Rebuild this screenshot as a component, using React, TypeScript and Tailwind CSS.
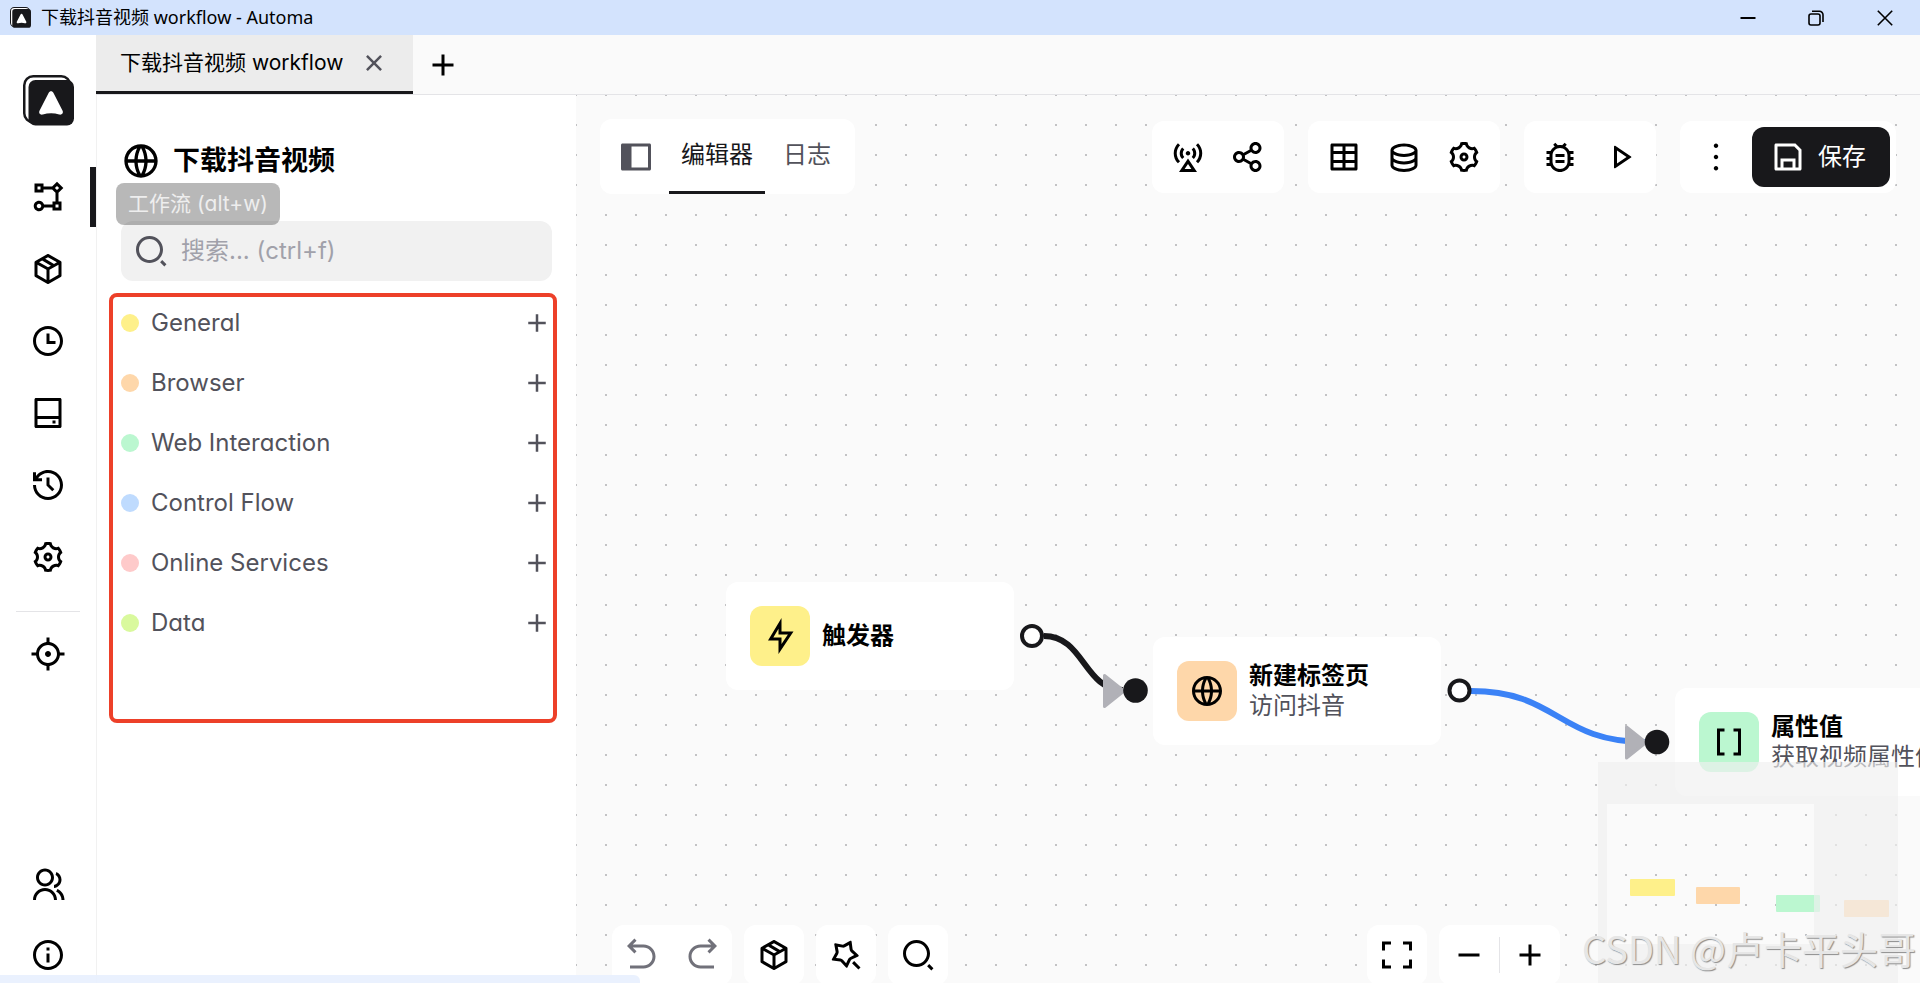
import React, { useState } from 'react';
import type { IconType } from 'react-icons';
import {
    RiAddLine,
    RiArrowGoBackLine,
    RiArrowGoForwardLine,
    RiBaseStationLine,
    RiBracketsLine,
    RiBug2Line,
    RiCloseLine,
    RiDatabase2Line,
    RiFlashlightLine,
    RiFlowChart,
    RiFocus3Line,
    RiFullscreenLine,
    RiGlobalLine,
    RiGroupLine,
    RiHardDrive2Line,
    RiHistoryLine,
    RiInformationLine,
    RiMagicLine,
    RiMore2Line,
    RiPlayLine,
    RiSaveLine,
    RiSearch2Line,
    RiSettings3Line,
    RiShareLine,
    RiSideBarFill,
    RiSubtractLine,
    RiTable2,
    RiTimeLine,
} from 'react-icons/ri';

interface NavItem {
    name: string;
    icon: IconType;
}

interface Category {
    name: string;
    color: string;
}

interface FlowNode {
    title: string;
    description?: string;
    icon: IconType;
    color: string;
    position: string;
}

const PackageIcon: IconType = ({ size = 24 }) => (
    <svg width={size} height={size} viewBox="0 0 24 24" fill="currentColor" aria-hidden="true">
        <path d="M21 16.5c0 .38-.21.71-.53.88l-7.9 4.44c-.16.12-.36.18-.57.18s-.41-.06-.57-.18l-7.9-4.44A.99.99 0 0 1 3 16.5v-9c0-.38.21-.71.53-.88l7.9-4.44c.16-.12.36-.18.57-.18s.41.06.57.18l7.9 4.44c.32.17.53.5.53.88v9M12 4.15l-1.890 1.070L16 8.610l1.960-1.110L12 4.150M6.040 7.500L12 10.850l1.960-1.100-5.880-3.400L6.040 7.500M5 15.910l6 3.380v-6.710L5 9.210v6.700m14 0v-6.700l-6 3.370v6.710l6-3.380z"/>
    </svg>
);

const navItems: NavItem[] = [
    { name: "工作流", icon: RiFlowChart },
    { name: "Packages", icon: PackageIcon },
    { name: "Schedule", icon: RiTimeLine },
    { name: "Storage", icon: RiHardDrive2Line },
    { name: "日志", icon: RiHistoryLine },
    { name: "Settings", icon: RiSettings3Line },
];

const categories: Category[] = [
    { name: "General", color: "bg-[#fef08a]" },
    { name: "Browser", color: "bg-[#fed7aa]" },
    { name: "Web Interaction", color: "bg-[#bbf7d0]" },
    { name: "Control Flow", color: "bg-[#bfdbfe]" },
    { name: "Online Services", color: "bg-[#fecaca]" },
    { name: "Data", color: "bg-[#d9f99d]" },
];

const nodes: FlowNode[] = [
    { title: "触发器", icon: RiFlashlightLine, color: "bg-[#fef08a]", position: "left-[150px] top-[487px]" },
    { title: "新建标签页", description: "访问抖音", icon: RiGlobalLine, color: "bg-[#fed7aa]", position: "left-[577px] top-[542px]" },
    { title: "属性值", description: "获取视频属性值", icon: RiBracketsLine, color: "bg-[#bbf7d0]", position: "left-[1099px] top-[593px]" },
];

const toolGroups: NavItem[][] = [
    [
        { name: "Host workflow", icon: RiBaseStationLine },
        { name: "Share", icon: RiShareLine },
    ],
    [
        { name: "Table", icon: RiTable2 },
        { name: "Global data", icon: RiDatabase2Line },
        { name: "Settings", icon: RiSettings3Line },
    ],
    [
        { name: "Debug", icon: RiBug2Line },
        { name: "Run", icon: RiPlayLine },
    ],
];

const Logo: React.FC<{ className?: string }> = ({ className }) => (
    <svg viewBox="0 0 51 51" className={className} aria-hidden="true">
        <rect x="1.25" y="1.25" width="46" height="46" rx="9" fill="#fff" stroke="#18181b" strokeWidth="2.5"/>
        <rect x="5.5" y="5" width="45.5" height="45.5" rx="7" fill="#18181b"/>
        <path
            d="M25.600 18c1-2.200 3.900-2.200 4.900 0l9.100 17.800c1.100 2.400-1 4.400-3.400 3.700-5.400-1.700-10.900-1.700-16.400 0-2.400.7-4.400-1.300-3.300-3.700z"
            fill="#fff"
        />
    </svg>
);

const IconButton: React.FC<{ name: string; icon: IconType; muted?: boolean }> = ({ name, icon: Icon, muted }) => (
    <button
        type="button"
        aria-label={name}
        className={`flex size-[60px] shrink-0 items-center justify-center rounded-xl ${muted ? 'text-[#71717a]' : 'text-black'}`}
    >
        <Icon size={36}/>
    </button>
);

const TitleBar: React.FC = () => (
    <header className="flex h-[35px] shrink-0 items-center bg-[#d3e3fd] pl-2.5 font-['Noto_Sans','Noto_Sans_CJK_SC',sans-serif] text-lg text-black">
        <Logo className="size-[21px]"/>
        <span className="ml-2.5 flex-1 pb-0.5">下载抖音视频 workflow - Automa</span>
        <button type="button" aria-label="Minimize" className="flex w-[68px] justify-center">
            <svg width="16" height="16" viewBox="0 0 16 16" fill="none" stroke="#000" strokeWidth="2">
                <path d="M.5 8h15"/>
            </svg>
        </button>
        <button type="button" aria-label="Restore" className="flex w-[68px] justify-center">
            <svg width="16" height="16" viewBox="0 0 16 16" fill="none" stroke="#000" strokeWidth="1.6">
                <rect x="1" y="4" width="11" height="11" rx="2"/>
                <path d="M4 1.300h7.500a3.500 3.500 0 0 1 3.500 3.500V12"/>
            </svg>
        </button>
        <button type="button" aria-label="Close" className="flex w-[70px] justify-center">
            <svg width="16" height="16" viewBox="0 0 16 16" fill="none" stroke="#000" strokeWidth="1.6">
                <path d="M.8.8l14.400 14.400M15.200.8L.8 15.200"/>
            </svg>
        </button>
    </header>
);

const Sidebar: React.FC = () => (
    <nav className="flex w-24 shrink-0 flex-col items-center bg-white pt-10">
        <Logo className="size-[51px] shrink-0"/>
        <ul className="mt-[41px] flex w-full flex-col gap-3">
            {navItems.map(({ name, icon }, index) => (
                <li key={name} className="relative flex justify-center">
                    <IconButton name={name} icon={icon}/>
                    {index === 0 && (
                        <>
                            <span className="absolute right-0 h-full w-1.5 bg-[#18181b]"/>
                            <span
                                role="tooltip"
                                className="absolute left-[116px] top-4 z-20 rounded-lg bg-black/28 px-3 py-1.5 text-[21px] leading-[30px] whitespace-nowrap text-[#eeeeee]"
                            >
                                工作流 (alt+w)
                            </span>
                        </>
                    )}
                </li>
            ))}
        </ul>
        <hr className="mt-6 mb-3 w-16 border-[#e4e4e7]"/>
        <IconButton name="Element selector" icon={RiFocus3Line}/>
        <div className="mt-auto -mb-0.5 flex flex-col gap-2.5">
            <IconButton name="Community" icon={RiGroupLine}/>
            <IconButton name="About" icon={RiInformationLine}/>
        </div>
    </nav>
);

const TabBar: React.FC = () => (
    <div className="flex h-[60px] shrink-0 border-b border-[#e4e4e7] bg-[#fafafa]">
        <div className="flex items-center border-b-3 border-[#18181b] bg-[#ececec] px-6 text-[21px]">
            <a href="#workflow">下载抖音视频 workflow</a>
            <button type="button" aria-label="Close tab" className="ml-4 text-[#52525b]">
                <RiCloseLine size={30}/>
            </button>
        </div>
        <button type="button" aria-label="New tab" className="ml-3 px-0">
            <RiAddLine size={36}/>
        </button>
    </div>
);

const BlockPanel: React.FC = () => {
    const [search, setSearch] = useState<string>('');

    return (
        <aside className="flex w-[480px] shrink-0 flex-col border-l border-[#f1f1f1] bg-white">
            <div className="mt-[46px] flex h-10 items-center gap-3 px-6">
                <RiGlobalLine size={40}/>
                <h1 className="text-[27px] font-semibold">下载抖音视频</h1>
            </div>
            <div className="mx-6 mt-10 flex h-[60px] items-center gap-3 rounded-xl bg-[#f1f1f1] px-3">
                <RiSearch2Line size={36} className="shrink-0 text-[#52525b]"/>
                <input
                    type="text"
                    aria-label="搜索"
                    value={search}
                    onChange={(e) => setSearch(e.target.value)}
                    placeholder="搜索... (ctrl+f)"
                    className="w-full bg-transparent text-2xl placeholder:text-[#a1a1aa] focus:outline-none"
                />
            </div>
            <ul className="mt-3 mr-[19px] ml-3 rounded-lg pr-[5px] pb-[70px] pl-3 outline-4 -outline-offset-4 outline-[#ed4029]">
                {categories.map(({ name, color }) => (
                    <li key={name}>
                        <button
                            type="button"
                            className="flex h-[60px] w-full items-center text-2xl text-[#52525b]"
                        >
                            <span className={`mr-3 size-[18px] rounded-full ${color}`}/>
                            <span>{name}</span>
                            <RiAddLine size={30} className="ml-auto"/>
                        </button>
                    </li>
                ))}
            </ul>
        </aside>
    );
};

const Edges: React.FC = () => (
    <svg className="absolute inset-0 size-full" fill="none" aria-hidden="true">
        <g strokeWidth="6">
            <path d="M468 541C508 541 508 595 547 595" stroke="#18181b"/>
            <path d="M895 596C982 596 982 647 1069 647" stroke="#3b82f6"/>
        </g>
        <g fill="#b1b1b7" stroke="#b1b1b7" strokeWidth="3" strokeLinejoin="round">
            <path d="M528.5 580.5V611.5L548 596Z"/>
            <path d="M1050.5 632V663L1070 647.5Z"/>
        </g>
        <g fill="#fff" stroke="#18181b" strokeWidth="4">
            <circle cx="456" cy="541" r="10"/>
            <circle cx="883.5" cy="595.5" r="10"/>
        </g>
        <g fill="#18181b">
            <circle cx="559.5" cy="595.5" r="12.3"/>
            <circle cx="1081" cy="647" r="12.3"/>
        </g>
    </svg>
);

const Node: React.FC<FlowNode> = ({ title, description, icon: Icon, color, position }) => (
    <div className={`absolute flex h-[108px] w-72 items-center gap-3 rounded-xl bg-white px-6 ${position}`}>
        <span className={`flex size-[60px] shrink-0 items-center justify-center rounded-xl ${color}`}>
            <Icon size={36}/>
        </span>
        <div className="text-2xl leading-[30px] whitespace-nowrap">
            <p className="font-semibold">{title}</p>
            {description && <p className="text-[#52525b]">{description}</p>}
        </div>
    </div>
);

const Toolbar: React.FC = () => (
    <div className="absolute inset-x-0 top-0 flex items-center p-6">
        <div className="flex h-[75px] items-center rounded-xl bg-white pr-3 pl-[18px]">
            <button type="button" aria-label="Toggle sidebar" className="mr-[15px] text-[#52525b]">
                <RiSideBarFill size={36}/>
            </button>
            <div role="tablist" className="flex h-full gap-1.5 text-2xl">
                <button type="button" role="tab" aria-selected="true" className="border-b-3 border-[#18181b] px-3 text-[#18181b]">
                    编辑器
                </button>
                <button type="button" role="tab" aria-selected="false" className="border-b-3 border-transparent px-3 text-[#52525b]">
                    日志
                </button>
            </div>
        </div>
        <div className="ml-auto flex gap-6">
            {toolGroups.map((group) => (
                <div key={group[0].name} className="flex rounded-xl bg-white p-1.5">
                    {group.map(({ name, icon }) => (
                        <IconButton key={name} name={name} icon={icon}/>
                    ))}
                </div>
            ))}
            <div className="flex gap-1.5 rounded-xl bg-white p-1.5">
                <IconButton name="More" icon={RiMore2Line}/>
                <button
                    type="button"
                    className="flex items-center gap-3 rounded-xl bg-[#18181b] pr-6 pl-[18px] text-2xl text-white"
                >
                    <RiSaveLine size={36}/>
                    保存
                </button>
            </div>
        </div>
    </div>
);

const MiniMap: React.FC = () => (
    <svg
        className="absolute right-[22px] -bottom-1 h-[225px] w-[300px]"
        viewBox="0 0 300 225"
        role="img"
        aria-label="Mini map"
    >
        <rect x="32" y="117" width="45" height="17" rx="1" fill="#fef08a"/>
        <rect x="98" y="125" width="44" height="17" rx="1" fill="#fed7aa"/>
        <rect x="178" y="133" width="44" height="17" rx="1" fill="#bbf7d0"/>
        <rect x="246" y="138" width="45" height="17" rx="1" fill="#fed7aa"/>
        <path d="M0 0H300V225H0ZM9 42V182H216V42Z" fill="#f0f0f0" fillOpacity="0.65" fillRule="evenodd"/>
    </svg>
);

const BottomControls: React.FC = () => (
    <div className="absolute inset-x-0 -bottom-0.5 flex gap-3 pr-[360px] pl-9">
        <div className="flex rounded-xl bg-white">
            <IconButton name="Undo" icon={RiArrowGoBackLine} muted/>
            <IconButton name="Redo" icon={RiArrowGoForwardLine} muted/>
        </div>
        <div className="rounded-xl bg-white">
            <IconButton name="Packages" icon={PackageIcon}/>
        </div>
        <div className="rounded-xl bg-white">
            <IconButton name="Auto align" icon={RiMagicLine}/>
        </div>
        <div className="rounded-xl bg-white">
            <IconButton name="Search blocks" icon={RiSearch2Line}/>
        </div>
        <div className="ml-auto rounded-xl bg-white">
            <IconButton name="Fit view" icon={RiFullscreenLine}/>
        </div>
        <div className="flex items-center rounded-xl bg-white">
            <IconButton name="Zoom out" icon={RiSubtractLine}/>
            <span className="h-9 w-px bg-[#e4e4e7]"/>
            <IconButton name="Zoom in" icon={RiAddLine}/>
        </div>
    </div>
);

const Canvas: React.FC = () => (
    <main className="relative min-w-0 flex-1 overflow-hidden bg-[#fafafa] bg-[radial-gradient(circle,#c2c2c4_1px,transparent_1px)] bg-[length:30px_30px] bg-[position:-15px_-15px]">
        {nodes.map((node) => (
            <Node key={node.title} {...node}/>
        ))}
        <Edges/>
        <Toolbar/>
        <BottomControls/>
        <MiniMap/>
        <p className="absolute right-1 bottom-2 font-['Noto_Sans_CJK_SC',sans-serif] text-[38px] leading-[54px] text-[#e6e6e6] [text-shadow:1px_1px_1px_#8c8c8c]">
            CSDN @卢卡平头哥
        </p>
    </main>
);

const App: React.FC = () => (
    <div className="relative flex h-screen flex-col overflow-hidden bg-white font-['Inter','Noto_Sans_CJK_SC',sans-serif] text-black [font-feature-settings:'cv11']">
        <TitleBar/>
        <div className="flex min-h-0 flex-1">
            <Sidebar/>
            <div className="flex min-w-0 flex-1 flex-col">
                <TabBar/>
                <div className="flex min-h-0 flex-1">
                    <BlockPanel/>
                    <Canvas/>
                </div>
            </div>
        </div>
        <div className="absolute bottom-0 left-0 h-2 w-1/3 rounded-tr-md bg-[#e8f0fe]/90"/>
    </div>
);

export default App;
